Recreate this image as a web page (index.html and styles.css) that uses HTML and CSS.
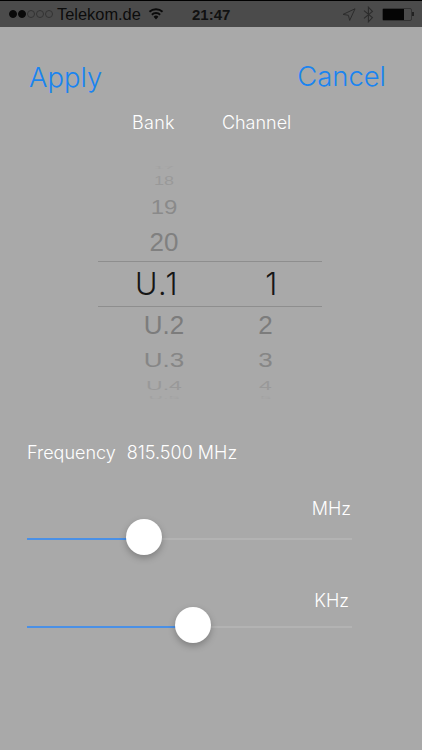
FILE: index.html
```html
<!DOCTYPE html>
<html lang="de">
<head>
<meta charset="utf-8">
<title>Frequency</title>
<link rel="stylesheet" href="styles.css">
</head>
<body>
<div class="screen">
  <header class="status">
    <div class="status-left">
      <span class="dots"><i class="dot on"></i><i class="dot on"></i><i class="dot"></i><i class="dot"></i><i class="dot"></i></span>
      <span class="carrier">Telekom.de</span>
      <svg class="wifi" viewBox="0 0 16 12" width="16" height="12"><path d="M8 11.5 5.6 8.7a3.4 3.4 0 0 1 4.8 0ZM4.5 7.4 3.2 5.9a7 7 0 0 1 9.6 0l-1.3 1.5a5 5 0 0 0-7 0ZM2.1 4.6.8 3.1a10.6 10.6 0 0 1 14.4 0l-1.3 1.5a8.7 8.7 0 0 0-11.8 0Z" fill="#0a0a0a"/></svg>
    </div>
    <span class="time">21:47</span>
    <div class="status-right">
      <svg class="arrow" viewBox="0 0 14 13" width="14" height="13"><path d="M13 .8 1 6.4l5.4.9 1.3 5.1Z" fill="none" stroke="#2c2c2c" stroke-width="1"/></svg>
      <svg class="bt" viewBox="0 0 11 17" width="11" height="17"><path d="M1 4.6 9.4 11.6 5.4 15.8V1.2L9.4 5.4 1 12.4" fill="none" stroke="#2c2c2c" stroke-width="1.1"/></svg>
      <span class="battery"><span class="battery-fill"></span></span><span class="battery-tip"></span>
    </div>
  </header>

  <nav class="actions">
    <span class="action">Apply</span>
    <span class="action cancel">Cancel</span>
  </nav>

  <div class="titles">
    <span class="title-bank">Bank</span>
    <span class="title-channel">Channel</span>
  </div>

  <section class="picker">
    <div class="wheel wheel-bank">
      <span class="item i17">17</span>
      <span class="item i18">18</span>
      <span class="item i19">19</span>
      <span class="item i20">20</span>
      <span class="item sel">U.1</span>
      <span class="item a1">U.2</span>
      <span class="item a2">U.3</span>
      <span class="item a3">U.4</span>
      <span class="item a4">U.5</span>
    </div>
    <div class="wheel wheel-channel">
      <span class="item i17"></span>
      <span class="item i18"></span>
      <span class="item i19"></span>
      <span class="item i20"></span>
      <span class="item sel">1</span>
      <span class="item a1">2</span>
      <span class="item a2">3</span>
      <span class="item a3">4</span>
      <span class="item a4">5</span>
    </div>
  </section>

  <p class="frequency"><span>Frequency</span><span>815.500 MHz</span></p>

  <section class="slider-block mhz">
    <div class="slider-label">MHz</div>
    <div class="slider"><div class="fill" style="width:117px"></div><div class="thumb" style="left:117px"></div></div>
  </section>
  <section class="slider-block khz">
    <div class="slider-label">KHz</div>
    <div class="slider"><div class="fill" style="width:166px"></div><div class="thumb" style="left:166px"></div></div>
  </section>
</div>
</body>
</html>
```

FILE: styles.css
```css
* { box-sizing: border-box; }
html, body { margin: 0; padding: 0; }
body { background: #a9a9a9; font-family: "Inter", "Liberation Sans", sans-serif; font-weight: 300; color: #fff; }
.screen { width: 422px; height: 750px; overflow: hidden; background: #a9a9a9; }

.status { height: 27px; background: #4b4b4b; border-top: 1px solid #000; display: flex; align-items: center; justify-content: space-between; padding: 0 8px 0 9px; color: #0c0c0c; font-family: "Liberation Sans", sans-serif; font-weight: 400; position: relative; }
.status-left, .status-right { display: flex; align-items: center; }
.dots { display: flex; gap: 1px; margin-right: 4px; }
.dot { width: 8px; height: 8px; border-radius: 50%; border: 1px solid #333; display: block; }
.dot.on { background: #0a0a0a; border-color: #0a0a0a; }
.carrier { font-size: 16.4px; }
.wifi { margin-left: 7px; margin-top: -1px; }
.time { position: absolute; left: 192px; top: 5px; font-size: 15px; font-weight: 700; color: #111; }
.arrow { margin-right: 7px; }
.bt { margin-right: 8px; }
.battery { width: 30px; height: 13px; border: 1px solid #333; border-radius: 2px; padding: 0 7px 0 0; display: block; }
.battery-fill { display: block; width: 100%; height: 100%; background: #050505; }
.battery-tip { width: 2px; height: 4px; background: #222; }

.actions { display: flex; justify-content: space-between; padding: 31px 36px 0 29px; height: 68px; color: #1a84f0; font-size: 27.4px; font-weight: 350; line-height: 38px; }
.cancel { margin-top: -1px; }

.titles { display: flex; font-size: 18px; line-height: 22px; height: 22px; margin-top: 17px; }
.title-bank { margin-left: 132px; letter-spacing: .3px; }
.title-channel { margin-left: 47px; }

.picker { margin: 31px 0 0 98px; width: 224px; height: 277px; display: flex; position: relative; }
.wheel { display: flex; flex-direction: column; align-items: center; }
.wheel-bank { width: 132px; }
.wheel-channel { width: 71px; }
.item { display: block; text-align: center; font-family: "Liberation Sans", sans-serif; font-weight: 400; overflow: visible; }
.i17 { height: 6px; line-height: 6px; font-size: 18px; color: #a2a2a2; transform: scaleY(.22); }
.i18 { height: 20px; line-height: 20px; color: #999; font-size: 18px; transform: scaleY(.72); }
.i19 { height: 32px; line-height: 32px; color: #8a8a8a; font-size: 24px; transform: scaleY(.85); }
.i20 { height: 38px; line-height: 38px; color: #808080; font-size: 26px; }
.sel { height: 45px; line-height: 45px; font-size: 30.5px; letter-spacing: 1.5px; color: #161616; font-family: "Inter", "Liberation Sans", sans-serif; font-weight: 300; }
.wheel-bank .sel { margin-right: 14px; }
.wheel-channel .sel { margin-left: 13px; }
.a1 { height: 38px; line-height: 38px; color: #7c7c7c; font-size: 26px; }
.a2 { height: 32px; line-height: 32px; color: #868686; font-size: 26px; transform: scaleY(.8); }
.a3 { height: 20px; line-height: 20px; color: #999; font-size: 23px; transform: scaleY(.55); }
.a4 { height: 4px; line-height: 4px; color: #a2a2a2; font-size: 20px; transform: scaleY(.15); }
.picker::before, .picker::after { content: ""; position: absolute; left: 0; right: 0; height: 1px; background: #8e8e8e; }
.picker::before { top: 96px; }
.picker::after { top: 141px; }

.frequency { margin: 0; padding-left: 27px; display: flex; gap: 11px; font-size: 18px; line-height: 22px; }

.slider-block { padding: 0 70px 0 27px; }
.slider-label { text-align: right; font-size: 18px; line-height: 22px; }
.mhz { margin-top: 34px; }
.khz { margin-top: 50px; }
.mhz .slider-label { padding-right: 1px; }
.khz .slider-label { padding-right: 3px; }
.slider { position: relative; height: 2px; background: #b3b3b3; margin-top: 18px; }
.khz .slider { margin-top: 14px; }
.fill { height: 2px; background: #4a90e6; }
.thumb { position: absolute; top: -19px; width: 36px; height: 36px; margin-left: -18px; border-radius: 50%; background: #fff; box-shadow: 0 3px 7px rgba(0,0,0,.25); }
```
